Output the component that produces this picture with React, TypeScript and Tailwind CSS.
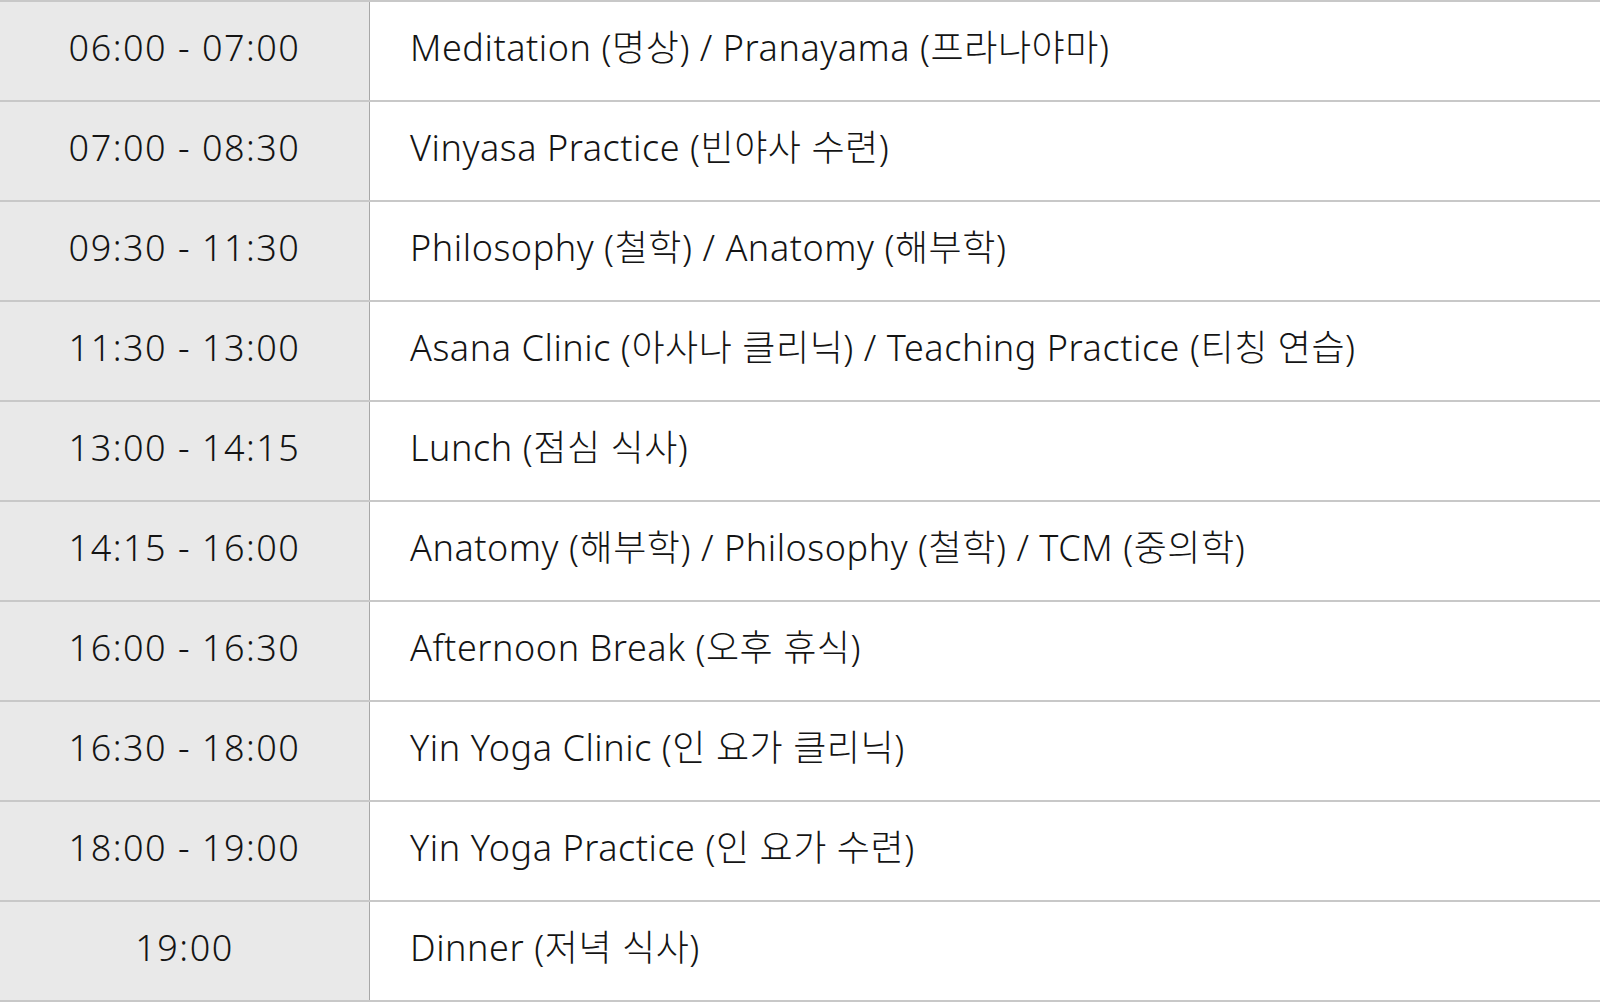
const rows: [string, string][] = [
  ["06:00 - 07:00", "Meditation (명상) / Pranayama (프라나야마)"],
  ["07:00 - 08:30", "Vinyasa Practice (빈야사 수련)"],
  ["09:30 - 11:30", "Philosophy (철학) / Anatomy (해부학)"],
  ["11:30 - 13:00", "Asana Clinic (아사나 클리닉) / Teaching Practice (티칭 연습)"],
  ["13:00 - 14:15", "Lunch (점심 식사)"],
  ["14:15 - 16:00", "Anatomy (해부학) / Philosophy (철학) / TCM (중의학)"],
  ["16:00 - 16:30", "Afternoon Break (오후 휴식)"],
  ["16:30 - 18:00", "Yin Yoga Clinic (인 요가 클리닉)"],
  ["18:00 - 19:00", "Yin Yoga Practice (인 요가 수련)"],
  ["19:00", "Dinner (저녁 식사)"],
];

export default function App() {
  return (
    <div className="w-[1600px] bg-white font-['Noto_Sans','Noto_Sans_CJK_KR',sans-serif] font-light text-[#141414]">
      <div className="border-t-2 border-[#c8c8c8]">
        {rows.map(([time, desc], i) => (
          <div key={i} className="flex h-[100px] border-b-2 border-[#c8c8c8]">
            <div className="flex w-[370px] shrink-0 items-center justify-center border-r border-[#a8a8a8] bg-[#e9e9e9] pb-[6px] text-[36px] tracking-[1.5px]">
              {time}
            </div>
            <div className="flex flex-1 items-center pb-[6px] pl-[40px] text-[36px] tracking-[0.55px]">{desc}</div>
          </div>
        ))}
      </div>
    </div>
  );
}
